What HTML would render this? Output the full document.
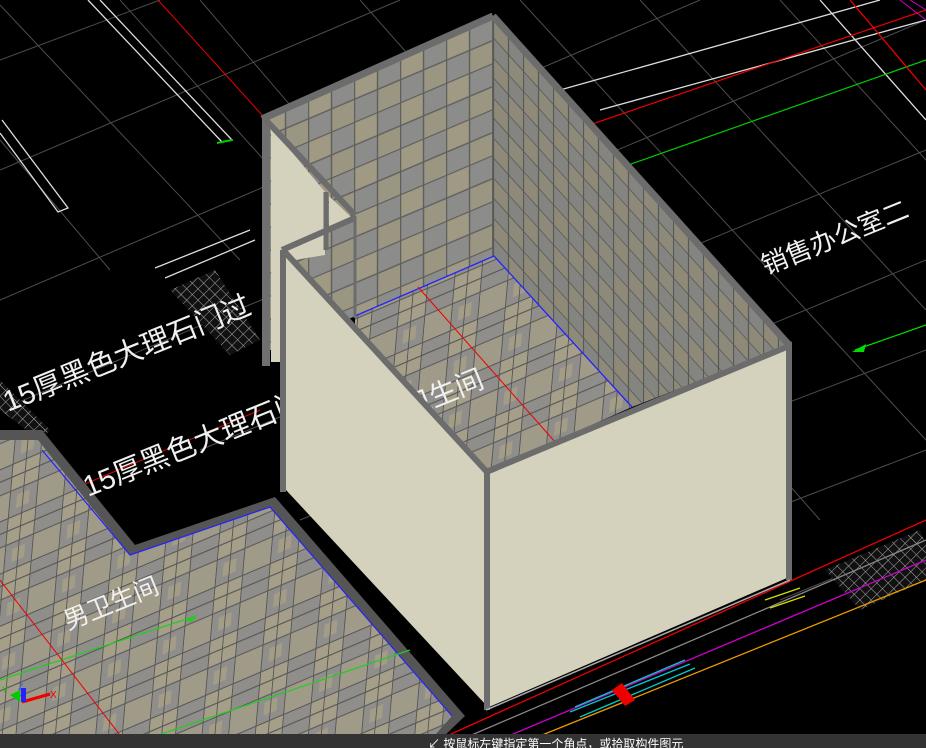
<!DOCTYPE html>
<html><head><meta charset="utf-8"><style>
html,body{margin:0;padding:0;background:#000;width:926px;height:748px;overflow:hidden}
svg{display:block}
text{font-family:"Liberation Sans","Noto Sans CJK SC",sans-serif;fill:#f0f0f0}
</style></head><body>
<svg width="926" height="748" viewBox="0 0 926 748" xmlns="http://www.w3.org/2000/svg">
<defs>
<pattern id="tl" width="46" height="46" patternUnits="userSpaceOnUse" patternTransform="translate(262 115) skewY(-23)">
<rect width="46" height="46" fill="#8c8c8a"/><rect width="23" height="23" fill="#a09a84"/><rect x="23" y="23" width="23" height="23" fill="#9a9682"/>
<path d="M0 0.5H46M0 23.5H46M0.5 0V46M23.5 0V46" stroke="#5e5e5c" stroke-width="1.4"/></pattern>
<pattern id="tr" width="30" height="40" patternUnits="userSpaceOnUse" patternTransform="translate(493 17) skewY(48)">
<rect width="30" height="40" fill="#848481"/><rect width="15" height="20" fill="#8f8a78"/><rect x="15" y="20" width="15" height="20" fill="#8e8a7a"/>
<path d="M0 0.5H30M0 20.5H30M0.5 0V40M15.5 0V40" stroke="#585856" stroke-width="1.2"/></pattern>
<pattern id="fl" width="60" height="48" patternUnits="userSpaceOnUse" patternTransform="rotate(-23) skewX(-28)">
<rect width="60" height="48" fill="#8f8e8a"/><rect width="30" height="24" fill="#a59e88"/><rect x="30" y="24" width="30" height="24" fill="#a09a88"/><rect x="8" y="30" width="14" height="12" fill="#a39c86"/>
<path d="M0 0.5H60M0 24.5H60M0.5 0V48M30.5 0V48M15 0V48M0 12H60" stroke="#555" stroke-width="1" fill="none"/></pattern>
<pattern id="hx" width="8" height="8" patternUnits="userSpaceOnUse" patternTransform="rotate(45)">
<rect width="8" height="8" fill="#111"/><path d="M0 0H8M0 0V8" stroke="#aaa" stroke-width="1"/></pattern>
</defs>
<rect width="926" height="748" fill="#000"/>
<g stroke="#4d4d4d" stroke-width="1">
<path d="M0 60L160 0M0 170L400 0M0 300L700 0M0 410L926 20M200 450L926 150M300 520L926 260M480 520L926 350M640 560L926 450M780 600L926 540"/>
<path d="M0 5L240 260M0 140L110 270M120 0L300 200M200 0L560 420M360 0L820 520M520 0L926 440M640 0L926 310M780 0L926 160"/>
</g>
<g stroke="#ddd" stroke-width="1.3" fill="none">
<path d="M88 0L222 142L232 140L100 0"/>
<path d="M0 133L58 212L68 208L2 120"/>
<path d="M155 268L250 230M165 278L255 240"/>
<path d="M560 90L880 0M600 110L926 20M820 0L926 120"/>
</g>
<path d="M217 143L232 140" stroke="#0c0" stroke-width="2"/>
<path d="M158 0L262 115" stroke="#e00" stroke-width="1"/>
<path d="M560 135L926 10" stroke="#e00" stroke-width="1.2"/>
<path d="M600 175L926 60" stroke="#0c0" stroke-width="1.2"/>
<path d="M900 0L926 20M910 0L926 10" stroke="#c0c" stroke-width="1"/>
<path d="M0 520L260 410" stroke="#e00" stroke-width="1"/>
<path d="M855 350L926 325" stroke="#0d0" stroke-width="1.2"/>
<polygon points="852,352 866,344 864,352" fill="#0d0"/>
<polygon points="0,380 50,430 40,440 0,410" fill="url(#hx)"/>
<polygon points="170,290 215,270 260,340 230,355" fill="url(#hx)"/>
<polygon points="825,570 920,530 926,545 926,580 860,610" fill="url(#hx)"/>
<g fill="none" stroke-width="1.3">
<path d="M420 748L926 520" stroke="#e00"/>
<path d="M480 748L926 560" stroke="#c0c"/>
<path d="M510 748L926 580" stroke="#e90"/>
<path d="M460 740L926 540" stroke="#888"/>
<path d="M575 707L685 660M570 712L690 664M580 717L695 668" stroke="#0cc"/>
<path d="M765 600L800 588M770 608L805 596" stroke="#dd0"/>
<path d="M850 0L926 90" stroke="#e00"/>
</g>
<polygon points="612,690 622,683 635,700 625,706" fill="#e00"/>
<!-- lower left floor -->
<polygon points="0,430 42,430 135,545 275,497 465,716 440,740 0,740" fill="#555"/>
<polygon points="0,440 38,440 130,555 270,507 452,716 435,735 0,735" fill="url(#fl)"/>
<path d="M42 450L130 555L270 507L452 716" fill="none" stroke="#22f" stroke-width="1.2"/>
<path d="M0 680L190 618M120 748L410 650" stroke="#2c2" stroke-width="1.2"/>
<polygon points="185,620 198,614 192,622" fill="#2c2"/>
<path d="M0 580L130 748" stroke="#e00" stroke-width="1"/>
<text x="8" y="412" font-size="29" transform="rotate(-22 8 412)">15厚黑色大理石门过</text>
<text x="88" y="497" font-size="29" transform="rotate(-22 88 497)">15厚黑色大理石门</text>
<text x="68" y="630" font-size="25" transform="rotate(-22 68 630)">男卫生间</text>
<text x="766" y="275" font-size="26" transform="rotate(-22 766 275)">销售办公室二</text>
<!-- back walls -->
<polygon points="262,115 493,17 493,258 355,316 283,350 262,350" fill="url(#tl)"/>
<polygon points="493,17 790,345 632,407 493,258" fill="url(#tr)"/>
<polygon points="355,316 494,256 632,407 486,472 355,330" fill="url(#fl)"/>
<path d="M355,316 L494,256 L632,407" fill="none" stroke="#22f" stroke-width="1.3"/>
<path d="M418,287 L556,443" stroke="#e00" stroke-width="1"/>
<text x="408" y="418" font-size="28" transform="rotate(-22 408 418)">卫生间</text>
<!-- left pillar -->
<rect x="262" y="118" width="8" height="248" fill="#707070"/>
<polygon points="271,127 325,192 325,255 283,262 283,362 271,362" fill="#d4d1bc"/>
<polygon points="329,196 352,218 329,228" fill="#d4d1bc"/>
<path d="M264,118 L355,215" stroke="#6c6c6c" stroke-width="6" fill="none"/>
<path d="M326,192 L326,250" stroke="#6c6c6c" stroke-width="5"/>
<!-- front-left wall -->
<polygon points="286,253 486,472 486,705 286,490" fill="#d4d1bc"/>
<path d="M283,250 L283,492" stroke="#6c6c6c" stroke-width="6"/>
<path d="M282,250 L355,218" stroke="#6c6c6c" stroke-width="6"/>
<path d="M283,250 L487,472" stroke="#6c6c6c" stroke-width="6"/>
<path d="M355,216 L355,318" stroke="#6c6c6c" stroke-width="3"/>
<!-- front-right wall -->
<polygon points="489,474 787,348 787,578 489,707" fill="#d4d1bc"/>
<path d="M493,16 L789,345" stroke="#6c6c6c" stroke-width="7"/>
<path d="M262,119 L493,16" stroke="#6c6c6c" stroke-width="7"/>
<path d="M486,472 L789,346 L789,580" stroke="#6c6c6c" stroke-width="6" fill="none"/>
<path d="M487,472 L487,710" stroke="#6c6c6c" stroke-width="6"/>
<path d="M486,710 L790,580" stroke="#aaa" stroke-width="1.5"/>
<path d="M22 702L50 694" stroke="#e00" stroke-width="3"/>
<text x="50" y="698" font-size="10" style="fill:#e00">X</text>
<text x="18" y="690" font-size="9" style="fill:#36f">Z</text>
<text x="2" y="693" font-size="9" style="fill:#0c0">Y</text>
<rect x="21" y="688" width="5" height="14" fill="#22f"/>
<polygon points="10,695 20,690 20,702" fill="#0c0"/>
<rect x="0" y="734" width="926" height="14" fill="#333"/>
<text x="428" y="748" font-size="12" style="fill:#fff">↙ 按鼠标左键指定第一个角点，或拾取构件图元</text>
</svg>
</body></html>
